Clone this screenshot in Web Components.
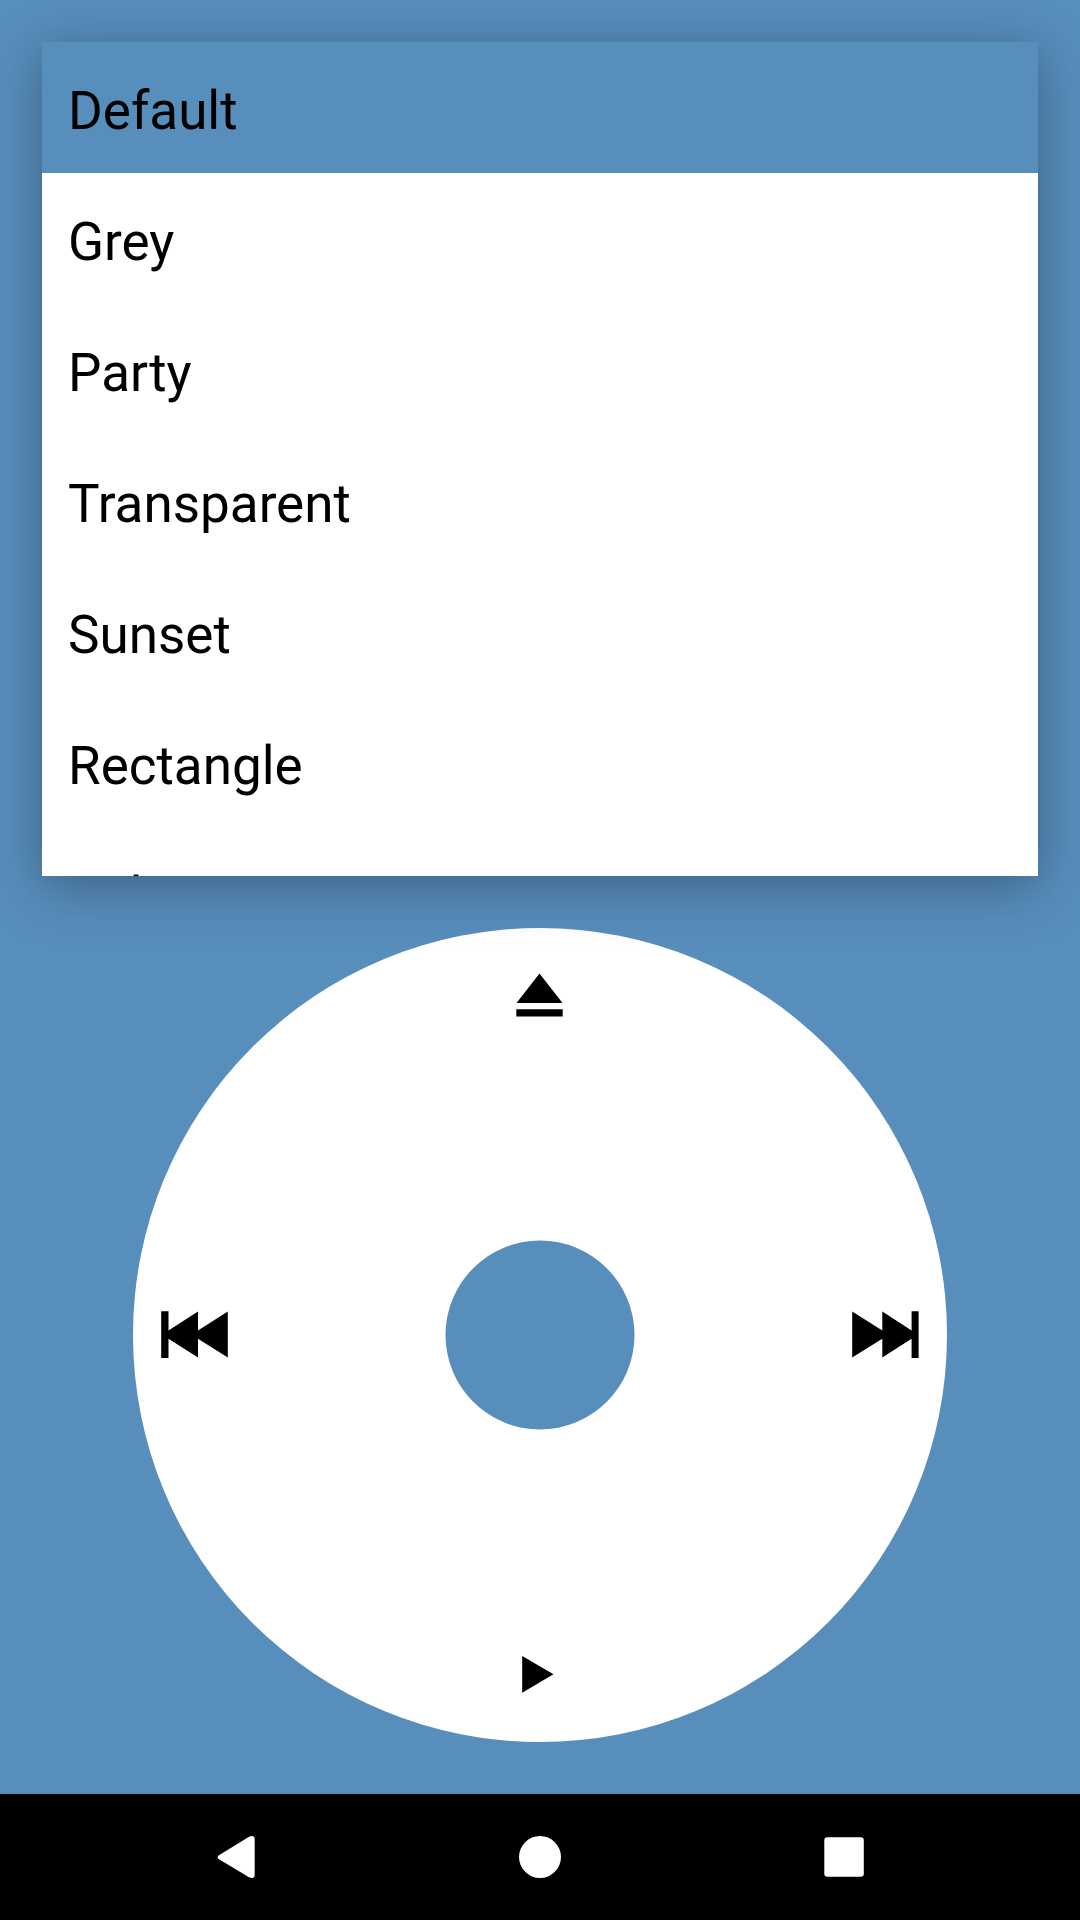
<!DOCTYPE html>
<html lang="en">
<head>
<meta charset="utf-8">
<title>Player themes</title>
<style>
html, body { margin: 0; height: 100%; }
body { background: #588ebc; font-family: Roboto, sans-serif; overflow: hidden; }
</style>
</head>
<body>
<player-screen>
  <theme-list>
    <theme-item selected>Default</theme-item>
    <theme-item>Grey</theme-item>
    <theme-item>Party</theme-item>
    <theme-item>Transparent</theme-item>
    <theme-item>Sunset</theme-item>
    <theme-item>Rectangle</theme-item>
    <theme-item>Ruby</theme-item>
  </theme-list>
  <click-wheel></click-wheel>
  <nav-bar slot="nav"></nav-bar>
</player-screen>
<script>
const define = (name, html) => customElements.define(name, class extends HTMLElement {
  constructor() {
    super();
    this.attachShadow({ mode: 'open' }).innerHTML = html;
  }
});

define('player-screen', `
<style>
:host { display: flex; flex-direction: column; width: 1080px; height: 1920px; background: #588ebc; }
main { flex: 1; display: flex; flex-direction: column; align-items: center; gap: 52px; padding-top: 42px; box-sizing: border-box; }
</style>
<main><slot></slot></main><slot name="nav"></slot>`);

define('theme-list', `
<style>
:host { display: block; width: 996px; height: 834px; background: #fff; position: relative; z-index: 1;
  box-shadow: 0 14px 52px rgba(0,0,0,.25), 0 0 34px rgba(0,0,0,.08); }
div { height: 100%; overflow: hidden; display: flex; flex-direction: column; }
</style>
<div><slot></slot></div>`);

define('theme-item', `
<style>
:host { display: flex; flex: none; align-items: center; height: 131px; padding: 6px 26px 0; box-sizing: border-box; font-size: 53px; line-height: 64px; color: #000; }
:host([selected]) { background: #588ebc; }
</style>
<slot></slot>`);

define('click-wheel', `
<style>
:host { display: block; width: 814px; height: 814px; }
svg { display: block; }
</style>
<svg width="814" height="814" viewBox="133 928 814 814">
  <circle cx="540" cy="1335" r="407" fill="#fff"/>
  <circle cx="540" cy="1335" r="94.5" fill="#588ebc"/>
  <path d="M539.5 973.5L562.5 1003H516.5ZM516.3 1009.3h46.4v7.2h-46.4Z"/>
  <path d="M161.2 1311.2h7.3v19.2L198 1311.5v18.9L227.8 1311.5v46L198 1338.8v18.7L168.5 1338.8v19.2h-7.3Z"/>
  <path d="M918.6 1311.2h-7v19.2L882.3 1311.5v18.9L852.2 1311.5v46L882.3 1338.8v18.7L911.6 1338.8v19.2h7Z"/>
  <path d="M522.2 1656L553.5 1674.3L522.2 1692.7Z"/>
</svg>`);

define('nav-bar', `
<style>
:host { display: block; height: 126px; background: #000; }
svg { display: block; }
</style>
<svg width="1080" height="126" viewBox="0 1794 1080 126" fill="#fff">
  <path d="M219 1855.3L249 1836.7Q254.7 1834.3 254.7 1839.5V1874.5Q254.7 1879.6 249 1877.3L219 1859.2Q216 1857.2 219 1855.3Z"/>
  <circle cx="540" cy="1857" r="21"/>
  <rect x="824.3" y="1837.3" width="39.5" height="39.5" rx="3"/>
</svg>`);
</script>
</body>
</html>
